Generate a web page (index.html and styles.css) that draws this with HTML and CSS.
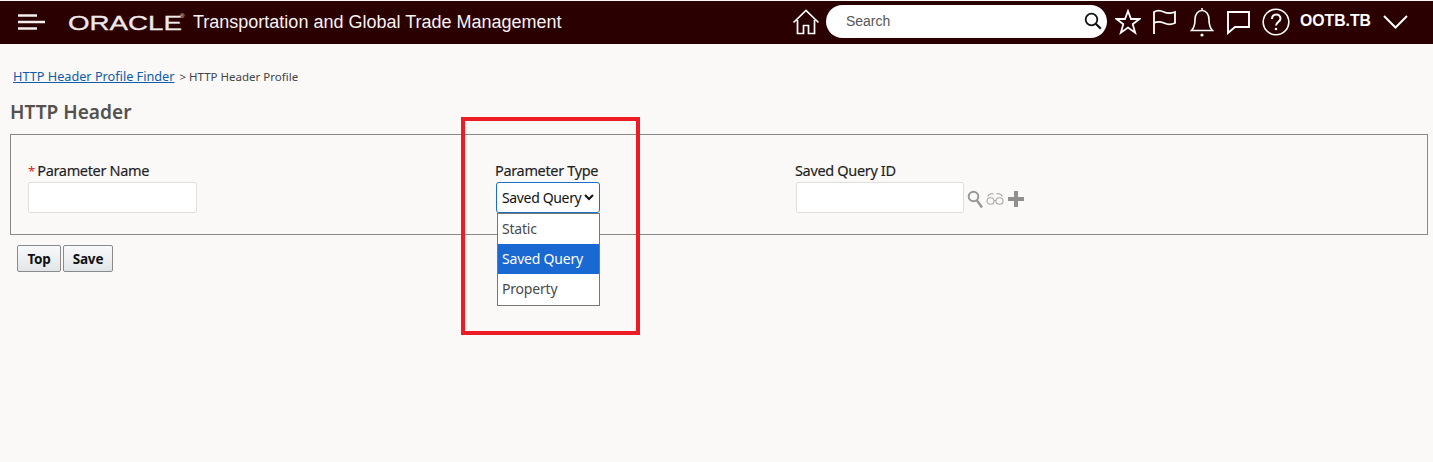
FILE: index.html
```html
<!DOCTYPE html>
<html lang="en">
<head>
<meta charset="utf-8">
<title>HTTP Header</title>
<link rel="stylesheet" href="styles.css">
</head>
<body>
<header class="topbar">
  <svg class="menu-icon" width="27" height="16" viewBox="0 0 27 16"><path d="M0 1.5H19M0 8H27M0 14.500H19" stroke="#f4eeee" stroke-width="2.400" fill="none"/></svg>
  <div class="logo-box"><span class="logo">ORACLE</span><span class="logo-mark">®</span></div>
  <div class="app-title">Transportation and Global Trade Management</div>
  <div class="tools">
    <svg class="tool home" width="28" height="28" viewBox="0 0 28 28" fill="none" stroke="#fff" stroke-width="1.700"><path d="M1.500 14.500 14 2.500l12.500 12M5.500 12v13.500h6v-8h5v8h6V12"/></svg>
    <div class="search">
      <span class="search-text">Search</span>
      <svg width="18" height="18" viewBox="0 0 18 18" fill="none" stroke="#111" stroke-width="1.800"><circle cx="7.500" cy="7.500" r="5.800"/><path d="m11.800 11.800 5 5" stroke-width="2.200"/></svg>
    </div>
    <svg class="tool star" width="26" height="26" viewBox="0 0 26 26" fill="none" stroke="#fff" stroke-width="1.800"><path d="m13 2 3 8h8.500l-6.800 5.200 2.500 8.500L13 18.600l-7.200 5.100 2.500-8.500L1.500 10H10z"/></svg>
    <svg class="tool flag" width="25" height="26" viewBox="0 0 25 26" fill="none" stroke="#fff" stroke-width="1.800"><path d="M2 25V3c3-2 6-2 10 0s7 1.500 11 0v11c-4 2-7 2-11 0-4-1.500-7-1.500-10 0"/></svg>
    <svg class="tool bell" width="24" height="30" viewBox="0 0 24 30" fill="none" stroke="#fff" stroke-width="1.600"><path d="M1.500 23.500c3-3 3.500-6 3.500-11C5 7 8 3.500 12 3.500s7 3.500 7 9c0 5 .5 8 3.500 11zM12 3.500V1"/><circle cx="12" cy="28" r="1.600" fill="#fff" stroke="none"/></svg>
    <svg class="tool chat" width="25" height="26" viewBox="0 0 25 26" fill="none" stroke="#fff" stroke-width="1.900"><path d="M2 3h21v15H9l-7 6z"/></svg>
    <svg class="tool help" width="28" height="28" viewBox="0 0 28 28" fill="none" stroke="#fff" stroke-width="1.600"><circle cx="14" cy="14" r="12.800"/><path d="M10 11c0-6 8.500-6 8.500-.5 0 3.500-4.500 3.500-4.500 7" stroke-width="2"/><circle cx="14" cy="21" r="1.300" fill="#fff" stroke="none"/></svg>
    <span class="user">OOTB.TB</span>
    <svg class="chevron" width="25" height="14" viewBox="0 0 25 14" fill="none" stroke="#fff" stroke-width="2"><path d="m1 1 11.500 11.500L24 1"/></svg>
  </div>
</header>

<nav class="crumbs"><a href="#" class="crumb-link">HTTP Header Profile Finder</a><span class="crumb-rest"> &gt; HTTP Header Profile</span></nav>
<h1 class="page-title">HTTP Header</h1>

<section class="panel">
  <div class="field field-name">
    <label class="label"><span class="req">*</span> Parameter Name</label>
    <input class="input input-name" type="text">
  </div>
  <div class="field field-type">
    <label class="label">Parameter Type</label>
    <div class="select-wrap">
      <select class="select"><option>Saved Query</option></select>
      <svg class="select-arrow" width="10" height="7" viewBox="0 0 10 7" fill="none" stroke="#111" stroke-width="2"><path d="m1 1 4 4 4-4"/></svg>
      <ul class="dropdown">
        <li class="option">Static</li>
        <li class="option selected">Saved Query</li>
        <li class="option">Property</li>
      </ul>
    </div>
  </div>
  <div class="field field-query">
    <label class="label">Saved Query ID</label>
    <div class="input-row">
      <input class="input input-query" type="text">
      <svg class="lookup" width="16" height="20" viewBox="0 0 16 20" fill="none" stroke="#979797"><circle cx="6.500" cy="6.500" r="4.800" stroke-width="2"/><path d="m10 10.500 5 7" stroke-width="2.400"/></svg>
      <svg class="glasses" width="18" height="13" viewBox="0 0 18 13" fill="none" stroke="#a8a8a8" stroke-width="1.100"><ellipse cx="4.500" cy="9" rx="3.500" ry="3.300"/><ellipse cx="13.500" cy="9" rx="3.500" ry="3.300"/><path d="M8 8.500h2M1.500 4.500C2.500 2 5.500 1 7.500 2M16.500 4.500C15.500 2 12.500 1 10.500 2"/></svg>
      <svg class="plus" width="16" height="16" viewBox="0 0 16 16"><path d="M6 0h4v6h6v4h-6v6H6v-6H0V6h6z" fill="#8f8f8f"/></svg>
    </div>
  </div>
</section>

<div class="actions">
  <button class="btn btn-top">Top</button>
  <button class="btn btn-save">Save</button>
</div>

<div class="highlight"></div>
</body>
</html>
```
FILE: styles.css
```css
* { box-sizing: border-box; }
html, body { margin: 0; height: 100%; }
body {
  position: relative;
  background: #faf9f7;
  font-family: "Noto Sans", "Open Sans", sans-serif;
  overflow: hidden;
}
.topbar {
  height: 43px;
  margin-top: 1px;
  background: #2a0000;
  display: flex;
  align-items: center;
  color: #fff;
}
.menu-icon { margin-left: 18px; margin-top: -1px; }
.logo-box { margin-left: 23px; width: 125px; display: flex; align-items: flex-start; height: 22px; position: relative; }
.logo {
  font-family: "Liberation Sans", sans-serif;
  font-size: 21px;
  line-height: 22px;
  color: #efeaea;
  -webkit-text-stroke: 0.3px #efeaea;
  transform: scaleX(1.32);
  transform-origin: left center;
}
.logo-mark { position: absolute; left: 112px; top: 1px; font: 6px "Liberation Sans", sans-serif; }
.app-title { font-family: "Liberation Sans", sans-serif; font-size: 18px; color: #f7f3f3; white-space: nowrap; }
.tools { margin-left: auto; display: flex; align-items: center; padding-right: 25px; margin-top: -3px; }
.tool { display: block; }
.home { margin-right: 6px; margin-top: 2px; }
.search {
  width: 281px;
  height: 33px;
  background: #fff;
  border-radius: 17px;
  display: flex;
  align-items: center;
  justify-content: space-between;
  padding: 0 5px 0 20px;
  margin-right: 8px;
}
.search-text { font-family: "Liberation Sans", sans-serif; font-size: 14px; color: #555; }
.star { margin-right: 11px; margin-top: 2px; }
.flag { margin-right: 13px; margin-top: 2px; }
.bell { margin-right: 12px; margin-top: 2px; }
.chat { margin-right: 11px; margin-top: 2px; }
.help { margin-right: 10px; margin-top: 2px; }
.user { font-family: "Liberation Sans", sans-serif; font-weight: 700; font-size: 15.800px; margin-right: 12px; }
.chevron { margin-top: 2px; }
.crumbs { margin: 22px 0 0 13px; height: 18px; line-height: 18px; white-space: nowrap; }
.crumb-link { font-size: 12.700px; color: #0f5ca8; text-decoration: underline; }
.crumb-rest { font-size: 11.500px; color: #444; margin-left: 2px; }
.page-title { margin: 16px 0 0 10px; font-size: 19.100px; line-height: 24px; font-weight: 600; color: #55514e; }
.panel {
  margin: 10px 5px 0 10px;
  height: 101px;
  border: 1px solid #888;
  display: flex;
  padding: 25px 0 0 17px;
}
.field { display: flex; flex-direction: column; }
.field-name { width: 467px; }
.field-type { width: 300px; }
.label { display: block; height: 21px; font-size: 14.500px; letter-spacing: -0.34px; line-height: 21px; margin-bottom: 1px; color: #1e1e1e; white-space: nowrap; -webkit-text-stroke: 0.15px #1e1e1e; }
.req { color: #e01b1b; margin-right: -1px; -webkit-text-stroke: 0; font-size: 13px; }
.input { height: 31px; border: 1px solid #dfdfdf; border-radius: 2px; background: #fff; padding: 0; display: block; }
.input-name { width: 169px; }
.input-query { width: 168px; }
.field-query .input { margin-left: 1px; }
.input-row { display: flex; align-items: center; }
.lookup { margin: 4px 0 0 3px; }
.glasses { margin: 2px 0 0 3px; }
.plus { margin: 2px 0 0 4px; }
.select-wrap { position: relative; margin-left: 1px; width: 104px; height: 31px; }
.select {
  appearance: none;
  width: 100%;
  height: 100%;
  border: 1px solid #1a6fc4;
  border-radius: 3px;
  background: #fff;
  padding: 0 0 1px 5px;
  font-family: "Noto Sans", sans-serif;
  font-size: 14px;
  letter-spacing: -0.35px;
  color: #111;
}
.select-arrow { position: absolute; right: 6px; top: 12px; }
.dropdown {
  position: absolute;
  left: 1px;
  top: 31px;
  width: 103px;
  height: 93px;
  margin: 0;
  padding: 0;
  list-style: none;
  background: #fff;
  border: 1px solid #777;
}
.option { height: 30px; line-height: 30px; padding-left: 4px; font-size: 14px; letter-spacing: -0.2px; color: #4a4a4a; white-space: nowrap; }
.option.selected { background: #1a68d1; color: #fff; }
.actions { display: flex; gap: 2px; margin: 10px 0 0 17px; }
.btn {
  height: 27px;
  padding: 0;
  border: 1px solid #8a8a8a;
  border-radius: 2px;
  background: linear-gradient(#f8f9fa, #e2e5e8);
  font-family: "Noto Sans", sans-serif;
  font-weight: 700;
  font-size: 13.500px;
  letter-spacing: -0.2px;
  color: #111;
}
.btn-top { width: 44px; }
.btn-save { width: 50px; }
.highlight {
  position: absolute;
  left: 461px;
  top: 117px;
  width: 179px;
  height: 218px;
  border: 4px solid #ed1c24;
  pointer-events: none;
}
```
